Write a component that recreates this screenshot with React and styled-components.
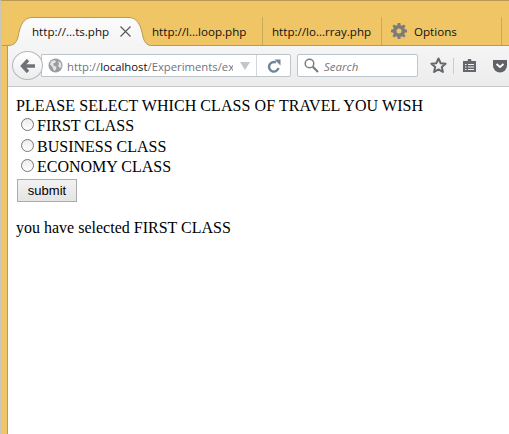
import React from 'react';
import styled, { createGlobalStyle } from 'styled-components';

const GlobalStyle = createGlobalStyle`
  html, body {
    margin: 0;
    padding: 0;
  }
  body {
    width: 509px;
    height: 434px;
    overflow: hidden;
    background: #efc566;
  }
`;

const Window = styled.div`
  width: 509px;
  height: 434px;
  display: flex;
  flex-direction: column;
  overflow: hidden;
  border-top: 1px solid #b89a55;
  border-left: 2px solid #c9c6bb;
  box-sizing: border-box;
`;

const TabStrip = styled.div`
  height: 45px;
  flex: none;
  display: flex;
  align-items: flex-end;
  padding-left: 5px;
  border-bottom: 1px solid #b89a55;
  box-sizing: border-box;
`;

const ActiveTab = styled.div`
  position: relative;
  width: 143px;
  height: 29px;
  margin-bottom: -1px;
  flex: none;
  display: flex;
  align-items: center;
  justify-content: space-between;
  padding: 0 19px 0 25px;
  box-sizing: border-box;
`;

const TabShape = styled.svg`
  position: absolute;
  left: 0;
  top: 0;
`;

const ActiveLabel = styled.span`
  position: relative;
  display: flex;
`;

const Tab = styled.div`
  width: ${(p) => p.$width}px;
  height: 28px;
  flex: none;
  display: flex;
  align-items: center;
  padding-left: ${(p) => p.$pad}px;
  box-sizing: border-box;
  border-right: 1px solid #c9a95c;
`;

const TabText = styled.span`
  font: 11.6px "Open Sans", "Noto Sans", sans-serif;
  color: #111;
  white-space: nowrap;
`;

const TabIcon = styled.svg`
  margin-right: 7px;
  flex: none;
`;

const Body = styled.div`
  flex: 1;
  min-height: 0;
  margin-left: 5px;
  display: flex;
  flex-direction: column;
  background: #fff;
  border-left: 1px solid #b89a55;
`;

const NavBar = styled.div`
  height: 41px;
  flex: none;
  display: flex;
  align-items: center;
  padding: 0 0 1px 4px;
  box-sizing: border-box;
  background: linear-gradient(#f5f5f5, #ececec);
  border-bottom: 1px solid #c4c7ca;
`;

const BackButton = styled.div`
  width: 31px;
  height: 29px;
  flex: none;
  z-index: 1;
  display: flex;
  align-items: center;
  justify-content: center;
  box-sizing: border-box;
  background: linear-gradient(#fff, #ececec);
  border: 1px solid #b4b8bb;
  border-radius: 50%;
`;

const UrlBar = styled.div`
  width: 250px;
  height: 23px;
  margin-left: -2px;
  flex: none;
  display: flex;
  align-items: center;
  padding-left: 6px;
  box-sizing: border-box;
  background: #fff;
  border: 1px solid #bcc4cc;
  border-radius: 0 2px 2px 0;
`;

const Url = styled.span`
  width: 167px;
  margin-left: 4px;
  padding-top: 1px;
  overflow: hidden;
  white-space: nowrap;
  font: 11.3px "Open Sans", "Noto Sans", sans-serif;
  color: #6e7480;
`;

const Host = styled.span`
  color: #101020;
`;

const Dropmarker = styled.svg`
  margin-left: 7px;
  flex: none;
`;

const Reload = styled.div`
  margin-left: 6px;
  width: 33px;
  align-self: stretch;
  display: flex;
  align-items: center;
  justify-content: center;
  border-left: 1px solid #d5d8db;
`;

const SearchBox = styled.div`
  width: 121px;
  height: 23px;
  margin-left: 6px;
  flex: none;
  display: flex;
  align-items: center;
  gap: 5px;
  padding-left: 6px;
  box-sizing: border-box;
  background: #fff;
  border: 1px solid #bcc4cc;
  border-radius: 2px;
`;

const SearchText = styled.span`
  padding-top: 1px;
  font: italic 11.5px "Open Sans", "Noto Sans", sans-serif;
  color: #777;
`;

const Tools = styled.div`
  display: flex;
  align-items: center;
  margin-left: 12px;
`;

const ToolSep = styled.div`
  width: 1px;
  height: 16px;
  margin: 0 8px 0 6px;
  background: #c8ccd0;
`;

const Page = styled.div`
  padding: 9px 8px;
  font: 16px "Liberation Serif", "Times New Roman", serif;
  color: #000;
  line-height: 20px;
`;

const Heading = styled.div`
  letter-spacing: 0.07px;
`;

const Option = styled.label`
  display: flex;
  align-items: center;
  height: 20.5px;
  padding-left: 5px;
`;

const Radio = styled.span`
  width: 13px;
  height: 13px;
  margin: 0 3px 3px 0;
  flex: none;
  box-sizing: border-box;
  background: linear-gradient(#ececec, #fff);
  border: 1px solid #777;
  border-radius: 50%;
`;

const SubmitButton = styled.button`
  display: block;
  width: 60px;
  height: 23px;
  margin: 1px 0 0 1px;
  padding: 0;
  box-sizing: border-box;
  font: 13px "Liberation Sans", Arial, sans-serif;
  color: #000;
  background: linear-gradient(#f2f2f2, #e4e4e4);
  border: 1px solid #acacac;
`;

const Result = styled.p`
  margin: 16px 0 0;
`;

const PlainIcon = styled.svg`
  flex: none;
`;

const PocketWrap = styled.svg`
  margin-left: 15px;
  flex: none;
`;

const ActiveTabShape = () => (
  <TabShape width="145" height="29" viewBox="0 0 145 29">
    <defs>
      <linearGradient id="tabFill" x1="0" y1="0" x2="0" y2="1">
        <stop offset="0" stopColor="#fcfcfc" />
        <stop offset="1" stopColor="#f4f4f4" />
      </linearGradient>
    </defs>
    <path
      fill="url(#tabFill)"
      d="M0 29V28.500C6 28.500 9 27 11 20C13 8 17 .5 25 .5H122C130 .5 134 8 136 20C138 27 141 28.500 145 28.500V29Z"
    />
    <path
      fill="none"
      stroke="#b89a55"
      d="M0 28.500C6 28.500 9 27 11 20C13 8 17 .5 25 .5H122C130 .5 134 8 136 20C138 27 141 28.500 145 28.500"
    />
  </TabShape>
);

const GearIcon = () => (
  <TabIcon width="16" height="16" viewBox="0 0 16 16">
    <path
      fill="#7b7b78"
      fillRule="evenodd"
      d="M6.700 0h2.600l.4 2.200 1.300.6 1.900-1.300 1.600 1.600-1.300 1.900.6 1.300 2.200.4v2.600l-2.200.4-.6 1.300 1.300 1.900-1.600 1.600-1.900-1.300-1.300.6-.4 2.200H6.700l-.4-2.200-1.300-.6-1.900 1.300-1.600-1.600 1.300-1.900-.6-1.300L0 9.300V6.700l2.200-.4.6-1.300-1.300-1.900 1.600-1.600 1.900 1.300 1.300-.6zM8 5.500a2.500 2.500 0 1 0 0 5 2.500 2.500 0 0 0 0-5z"
    />
  </TabIcon>
);

const CloseIcon = () => (
  <PlainIcon width="11" height="11" viewBox="0 0 11 11">
    <path d="M.5.5l10 10M10.500.5l-10 10" stroke="#555" strokeWidth="1.100" fill="none" />
  </PlainIcon>
);

const BackIcon = () => (
  <PlainIcon width="16" height="14" viewBox="0 0 16 14">
    <path d="M8 1L2.500 7 8 13M3 7H15" stroke="#6f7378" strokeWidth="3.400" fill="none" />
  </PlainIcon>
);

const GlobeIcon = () => (
  <PlainIcon width="15" height="15" viewBox="0 0 15 15">
    <circle cx="7.500" cy="7.500" r="7" fill="#9a9c9f" />
    <path d="M3 3.500l3-1.500 2 1-1 2-2 .5 1 2.500 2.500.5-.5 3-2 1.500L4.500 9 2 6.500zM10 3l3 2 .5 4-2 1-1.500-2.500 1-1.500z" fill="#e3e4e5" />
  </PlainIcon>
);

const ReloadIcon = () => (
  <PlainIcon width="14" height="14" viewBox="0 0 14 14">
    <path d="M11.500 9A4.800 4.800 0 1 1 9 3.500" stroke="#6f8499" strokeWidth="2.400" fill="none" />
    <path d="M7.500 .5h6v6z" fill="#6f8499" />
  </PlainIcon>
);

const SearchIcon = () => (
  <PlainIcon width="15" height="15" viewBox="0 0 15 15">
    <circle cx="5.500" cy="5.500" r="4.300" stroke="#7a7d80" strokeWidth="1.500" fill="none" />
    <path d="M8.800 8.800L14 14" stroke="#7a7d80" strokeWidth="2.200" />
  </PlainIcon>
);

const StarIcon = () => (
  <PlainIcon width="17" height="17" viewBox="0 0 17 17">
    <path
      d="M8.500 1.500l2.100 4.700 5 .5-3.800 3.300 1.100 5-4.400-2.600-4.400 2.600 1.100-5L1.400 6.700l5-.5z"
      stroke="#64686c"
      strokeWidth="2"
      strokeLinejoin="round"
      fill="none"
    />
  </PlainIcon>
);

const ClipboardIcon = () => (
  <PlainIcon width="15" height="15" viewBox="0 0 15 15">
    <path
      fill="#64686c"
      fillRule="evenodd"
      d="M1 3h4.500L6 1h3l.5 2H14v11H1zM3 6v1h1.500V6zm3 0v1h6V6zM3 8.500v1h1.500v-1zm3 0v1h6v-1zM3 11v1h1.500v-1zm3 0v1h6v-1z"
    />
  </PlainIcon>
);

const PocketIcon = () => (
  <PocketWrap width="16" height="15" viewBox="0 0 16 15">
    <path fill="#5f6367" d="M1 2h14v5.500a7 7 0 0 1-14 0z" />
    <path d="M4.500 6l3.500 3 3.500-3" stroke="#fff" strokeWidth="1.800" fill="none" />
  </PocketWrap>
);

export default () => {
  return (
    <Window>
      <GlobalStyle />
      <TabStrip>
        <ActiveTab>
          <ActiveTabShape />
          <ActiveLabel>
            <TabText>http://...ts.php</TabText>
          </ActiveLabel>
          <ActiveLabel>
            <CloseIcon />
          </ActiveLabel>
        </ActiveTab>
        <Tab $width={113} $pad={2}>
          <TabText>http://l...loop.php</TabText>
        </Tab>
        <Tab $width={119} $pad={9}>
          <TabText>http://lo...rray.php</TabText>
        </Tab>
        <Tab $width={120} $pad={9}>
          <GearIcon />
          <TabText>Options</TabText>
        </Tab>
      </TabStrip>
      <Body>
        <NavBar>
          <BackButton>
            <BackIcon />
          </BackButton>
          <UrlBar>
            <GlobeIcon />
            <Url>
              http://<Host>localhost</Host>/Experiments/ex
            </Url>
            <Dropmarker width="10" height="8" viewBox="0 0 10 8">
              <path d="M0 0h10L5 8z" fill="#c0c6cc" />
            </Dropmarker>
            <Reload>
              <ReloadIcon />
            </Reload>
          </UrlBar>
          <SearchBox>
            <SearchIcon />
            <SearchText>Search</SearchText>
          </SearchBox>
          <Tools>
            <StarIcon />
            <ToolSep />
            <ClipboardIcon />
            <PocketIcon />
          </Tools>
        </NavBar>
        <Page>
          <Heading>PLEASE SELECT WHICH CLASS OF TRAVEL YOU WISH</Heading>
          <Option><Radio />FIRST CLASS</Option>
          <Option><Radio />BUSINESS CLASS</Option>
          <Option><Radio />ECONOMY CLASS</Option>
          <SubmitButton>submit</SubmitButton>
          <Result>you have selected FIRST CLASS</Result>
        </Page>
      </Body>
    </Window>
  );
};
